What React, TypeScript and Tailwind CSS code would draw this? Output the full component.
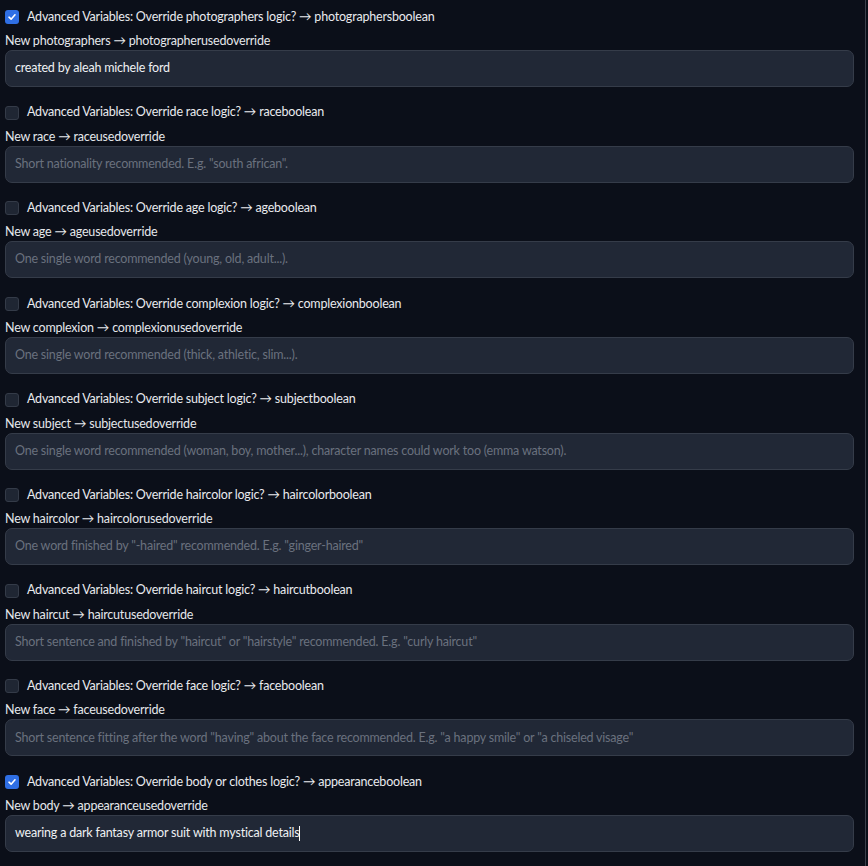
import React from 'react';

interface Item {
  key: string;
  label: string;
  sub: string;
  checked: boolean;
  value?: string;
  placeholder?: string;
}

const items: Item[] = [
  { key: 'photographers', label: 'Advanced Variables: Override photographers logic? → photographersboolean', sub: 'New photographers → photographerusedoverride', checked: true, value: 'created by aleah michele ford' },
  { key: 'race', label: 'Advanced Variables: Override race logic? → raceboolean', sub: 'New race → raceusedoverride', checked: false, placeholder: 'Short nationality recommended. E.g. "south african".' },
  { key: 'age', label: 'Advanced Variables: Override age logic? → ageboolean', sub: 'New age → ageusedoverride', checked: false, placeholder: 'One single word recommended (young, old, adult...).' },
  { key: 'complexion', label: 'Advanced Variables: Override complexion logic? → complexionboolean', sub: 'New complexion → complexionusedoverride', checked: false, placeholder: 'One single word recommended (thick, athletic, slim...).' },
  { key: 'subject', label: 'Advanced Variables: Override subject logic? → subjectboolean', sub: 'New subject → subjectusedoverride', checked: false, placeholder: 'One single word recommended (woman, boy, mother...), character names could work too (emma watson).' },
  { key: 'haircolor', label: 'Advanced Variables: Override haircolor logic? → haircolorboolean', sub: 'New haircolor → haircolorusedoverride', checked: false, placeholder: 'One word finished by "-haired" recommended. E.g. "ginger-haired"' },
  { key: 'haircut', label: 'Advanced Variables: Override haircut logic? → haircutboolean', sub: 'New haircut → haircutusedoverride', checked: false, placeholder: 'Short sentence and finished by "haircut" or "hairstyle" recommended. E.g. "curly haircut"' },
  { key: 'face', label: 'Advanced Variables: Override face logic? → faceboolean', sub: 'New face → faceusedoverride', checked: false, placeholder: 'Short sentence fitting after the word "having" about the face recommended. E.g. "a happy smile" or "a chiseled visage"' },
  { key: 'body', label: 'Advanced Variables: Override body or clothes logic? → appearanceboolean', sub: 'New body → appearanceusedoverride', checked: true, value: 'wearing a dark fantasy armor suit with mystical details' },
];

const Check: React.FC<{ on: boolean }> = ({ on }) =>
  on ? (
    <span className="w-[14px] h-[14px] shrink-0 rounded-[3px] bg-[#2f6fe4] flex items-center justify-center">
      <svg width="10" height="10" viewBox="0 0 10 10" fill="none">
        <path d="M2 5.2 L4.1 7.2 L8 2.8" stroke="#fff" strokeWidth="1.6" strokeLinecap="round" strokeLinejoin="round" />
      </svg>
    </span>
  ) : (
    <span className="w-[14px] h-[14px] shrink-0 rounded-[3px] bg-[#1f2633] border border-[#343b48]" />
  );

export default function App() {
  return (
    <div className="w-[868px] h-[866px] bg-[#0b0f19] overflow-hidden flex text-[12.5px] tracking-[-0.2px]" style={{ fontFamily: 'Lato, "Noto Sans", sans-serif' }}>
      <div className="w-[866px] border-r border-[#3b404b] pt-[8px] pl-[5px] pr-[11px] flex flex-col">
        {items.map((it) => (
          <div key={it.key} className="flex flex-col pb-[16.625px]">
            <div className="h-[18px] flex items-center gap-[8px]">
              <Check on={it.checked} />
              <span className="text-[#e9eaee]">{it.label}</span>
            </div>
            <div className="mt-[7px] h-[16px] leading-[16px] text-[#e5e7eb]">{it.sub}</div>
            <div className="mt-[1px] h-[37px] rounded-[7px] bg-[#212836] border border-[#353c49] flex items-center px-[9px]">
              {it.value ? (
                <span className="text-[#eef0f3]">
                  {it.value}
                  {it.key === 'body' && <span className="inline-block w-px h-[15px] bg-white align-middle" />}
                </span>
              ) : (
                <span className="text-[#6a717e]">{it.placeholder}</span>
              )}
            </div>
          </div>
        ))}
      </div>
    </div>
  );
}
